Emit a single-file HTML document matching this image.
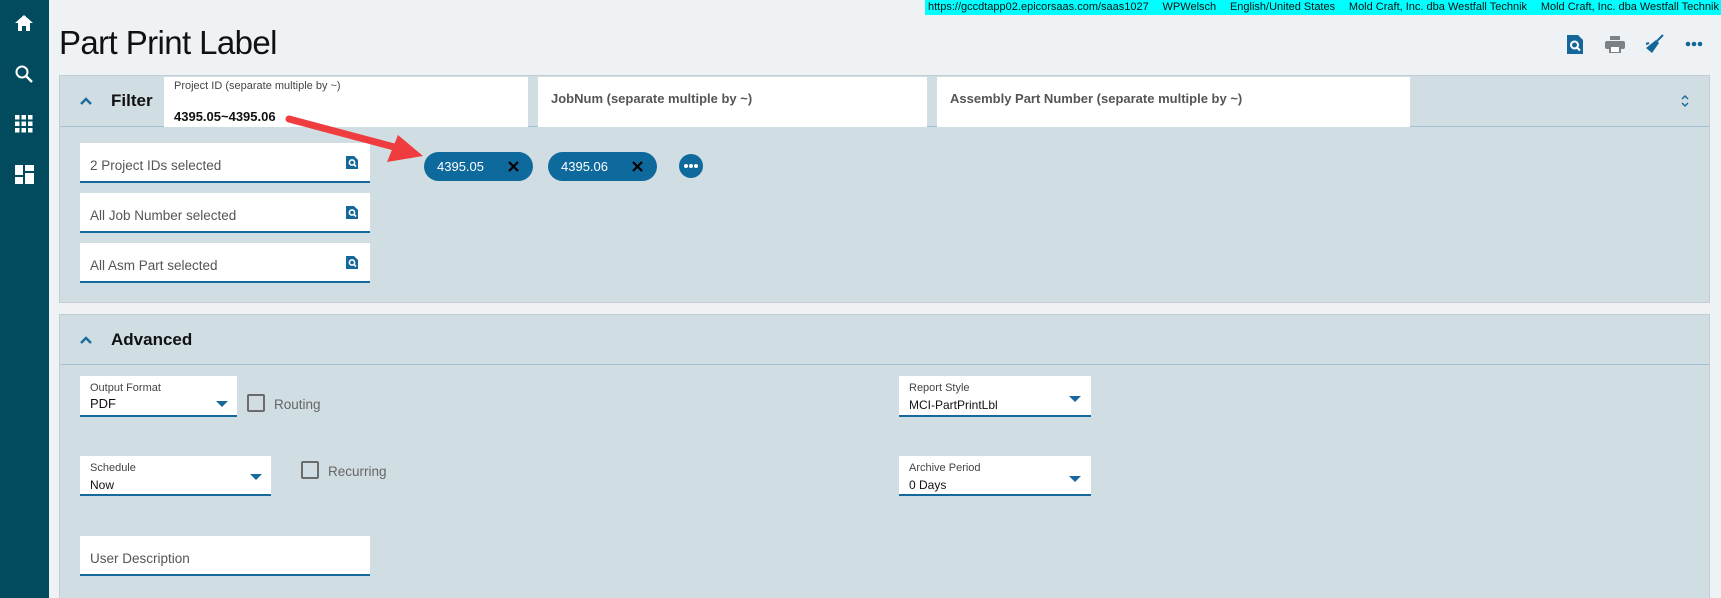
<!DOCTYPE html>
<html><head><meta charset="utf-8"><style>
*{box-sizing:border-box;margin:0;padding:0}
html,body{width:1721px;height:598px;overflow:hidden;background:#eef2f5}
body{font-family:"Liberation Sans",sans-serif;position:relative;color:#111}
.abs{position:absolute}
#side{left:0;top:0;width:49px;height:598px;background:#024b5f}
#top{left:925px;top:0;width:796px;height:15px;background:#00ffff;font-size:11px;line-height:15px;color:#111;display:flex;justify-content:space-between;padding:0 2px 0 3px;white-space:nowrap}
h1{position:absolute;left:59px;top:24px;font-weight:normal;font-size:33px;letter-spacing:-0.6px;color:#111}
.panel{background:#d0dde2;border:1px solid #c3cdd2}
.hdrline{height:1px;background:#9fc3d3}
.box{background:#fff}
.lbl{font-size:11px;color:#444}
.inp{background:#fff;border-bottom:2px solid #16699c}
.ph{font-size:13.5px;color:#555}
.chip{background:#0e6a9c;border-radius:15px;color:#fff;font-size:13px;line-height:29px;padding-left:13px;height:29px}
.cb{width:18px;height:18px;border:2px solid #6b6b6b;border-radius:2px;background:transparent}
.tri{width:0;height:0;border-left:6px solid transparent;border-right:6px solid transparent;border-top:6px solid #16699c}
.sect{font-size:17px;font-weight:bold}
</style></head><body>
<div id="side" class="abs">
 <svg class="abs" style="left:14px;top:14px" width="20" height="18" viewBox="0 0 20 18"><path d="M10 1 L19 9 H16 V17 H12 V12 H8 V17 H4 V9 H1 Z" fill="#fff"/></svg>
 <svg class="abs" style="left:14px;top:64px" width="20" height="20" viewBox="0 0 20 20"><circle cx="8" cy="8" r="5.5" stroke="#fff" stroke-width="2" fill="none"/><path d="M12 12 L18 18" stroke="#fff" stroke-width="2.4"/></svg>
 <svg class="abs" style="left:15px;top:115px" width="18" height="18" viewBox="0 0 18 18" fill="#fff"><rect x="0" y="0" width="4.5" height="4.5"/><rect x="6.5" y="0" width="4.5" height="4.5"/><rect x="13" y="0" width="4.5" height="4.5"/><rect x="0" y="6.5" width="4.5" height="4.5"/><rect x="6.5" y="6.5" width="4.5" height="4.5"/><rect x="13" y="6.5" width="4.5" height="4.5"/><rect x="0" y="13" width="4.5" height="4.5"/><rect x="6.5" y="13" width="4.5" height="4.5"/><rect x="13" y="13" width="4.5" height="4.5"/></svg>
 <svg class="abs" style="left:15px;top:165px" width="19" height="19" viewBox="0 0 19 19" fill="#fff"><rect x="0" y="0" width="8" height="10"/><rect x="0" y="12" width="8" height="7"/><rect x="10" y="0" width="9" height="6"/><rect x="10" y="8" width="9" height="11"/></svg>
</div>
<div id="top" class="abs"><span>https://gccdtapp02.epicorsaas.com/saas1027</span><span>WPWelsch</span><span>English/United States</span><span>Mold Craft, Inc. dba Westfall Technik</span><span>Mold Craft, Inc. dba Westfall Technik</span></div>
<h1>Part Print Label</h1>
<svg class="abs" style="left:1567px;top:35px" width="16" height="19" viewBox="0 0 16 19"><path d="M0 0 H11 L16 5 V19 H0 Z" fill="#15679a"/><circle cx="7.5" cy="10" r="3.5" stroke="#fff" stroke-width="2" fill="none"/><path d="M10 12.5 L13 15.5" stroke="#fff" stroke-width="2"/></svg>
<svg class="abs" style="left:1605px;top:36px" width="20" height="17" viewBox="0 0 20 17" fill="#7a8288"><rect x="5" y="0" width="10" height="4"/><rect x="0" y="5" width="20" height="8" rx="2"/><rect x="5" y="10" width="10" height="7" fill="#fff" stroke="#7a8288" stroke-width="2"/></svg>
<svg class="abs" style="left:1645px;top:34px" width="19" height="20" viewBox="0 0 19 20"><path d="M12 7 L18 1" stroke="#15679a" stroke-width="2"/><path d="M11 6 L14 9 L7 19 L1 14 Z" fill="#15679a"/><path d="M1 10 L4 9" stroke="#15679a" stroke-width="2"/></svg>
<svg class="abs" style="left:1685px;top:41px" width="18" height="6" viewBox="0 0 18 6" fill="#15679a"><circle cx="3" cy="3" r="2.3"/><circle cx="9" cy="3" r="2.3"/><circle cx="15" cy="3" r="2.3"/></svg>

<div class="abs panel" style="left:59px;top:75px;width:1651px;height:228px"></div>
<div class="abs hdrline" style="left:60px;top:126px;width:1649px"></div>
<svg class="abs" style="left:80px;top:97px" width="12" height="8" viewBox="0 0 12 8"><path d="M1 7 L6 2 L11 7" stroke="#1a6d9a" stroke-width="2.4" fill="none"/></svg>
<div class="abs sect" style="left:111px;top:91px">Filter</div>
<div class="abs box" style="left:164px;top:77px;width:364px;height:50px"></div>
<div class="abs lbl" style="left:174px;top:80px">Project ID (separate multiple by ~)</div>
<div class="abs" style="left:174px;top:109px;font-size:13px;font-weight:bold;color:#111">4395.05~4395.06</div>
<div class="abs box" style="left:538px;top:77px;width:389px;height:50px"></div>
<div class="abs" style="left:551px;top:91px;font-size:13px;font-weight:bold;color:#555">JobNum (separate multiple by ~)</div>
<div class="abs box" style="left:937px;top:77px;width:473px;height:50px"></div>
<div class="abs" style="left:950px;top:91px;font-size:13px;font-weight:bold;color:#555">Assembly Part Number (separate multiple by ~)</div>
<svg class="abs" style="left:1681px;top:94px" width="8" height="14" viewBox="0 0 8 14"><path d="M1 5 L4 2 L7 5 M1 9 L4 12 L7 9" stroke="#1a6d9a" stroke-width="1.5" fill="none"/></svg>

<div class="abs inp" style="left:80px;top:143px;width:290px;height:40px"></div>
<div class="abs ph" style="left:90px;top:158px">2 Project IDs selected</div>
<div class="abs inp" style="left:80px;top:193px;width:290px;height:40px"></div>
<div class="abs ph" style="left:90px;top:208px">All Job Number selected</div>
<div class="abs inp" style="left:80px;top:243px;width:290px;height:40px"></div>
<div class="abs ph" style="left:90px;top:258px">All Asm Part selected</div>
<svg class="abs" style="left:346px;top:156px" width="12" height="13" viewBox="0 0 12 13"><path d="M0 0 H8 L12 4 V13 H0 Z" fill="#15679a"/><circle cx="6" cy="6.5" r="2.6" stroke="#fff" stroke-width="1.6" fill="none"/><path d="M8 8.5 L10 10.5" stroke="#fff" stroke-width="1.6"/></svg>
<svg class="abs" style="left:346px;top:206px" width="12" height="13" viewBox="0 0 12 13"><path d="M0 0 H8 L12 4 V13 H0 Z" fill="#15679a"/><circle cx="6" cy="6.5" r="2.6" stroke="#fff" stroke-width="1.6" fill="none"/><path d="M8 8.5 L10 10.5" stroke="#fff" stroke-width="1.6"/></svg>
<svg class="abs" style="left:346px;top:256px" width="12" height="13" viewBox="0 0 12 13"><path d="M0 0 H8 L12 4 V13 H0 Z" fill="#15679a"/><circle cx="6" cy="6.5" r="2.6" stroke="#fff" stroke-width="1.6" fill="none"/><path d="M8 8.5 L10 10.5" stroke="#fff" stroke-width="1.6"/></svg>

<div class="abs chip" style="left:424px;top:152px;width:109px">4395.05</div>
<div class="abs chip" style="left:548px;top:152px;width:109px">4395.06</div>
<svg class="abs" style="left:508px;top:161px" width="11" height="11" viewBox="0 0 11 11"><path d="M1 1 L10 10 M10 1 L1 10" stroke="#000" stroke-width="2.2"/></svg>
<svg class="abs" style="left:632px;top:161px" width="11" height="11" viewBox="0 0 11 11"><path d="M1 1 L10 10 M10 1 L1 10" stroke="#000" stroke-width="2.2"/></svg>
<svg class="abs" style="left:679px;top:154px" width="24" height="24" viewBox="0 0 24 24"><circle cx="12" cy="12" r="12" fill="#0e6a9c"/><circle cx="7" cy="12" r="2" fill="#fff"/><circle cx="12" cy="12" r="2" fill="#fff"/><circle cx="17" cy="12" r="2" fill="#fff"/></svg>
<svg class="abs" style="left:280px;top:110px" width="150" height="55" viewBox="0 0 150 55"><path d="M9 9 L118 38" stroke="#ef3c3f" stroke-width="7" stroke-linecap="round"/><path d="M143 46 L107 52 L118 25 Z" fill="#ef3c3f"/></svg>

<div class="abs panel" style="left:59px;top:314px;width:1651px;height:290px"></div>
<div class="abs hdrline" style="left:60px;top:364px;width:1649px"></div>
<svg class="abs" style="left:80px;top:336px" width="12" height="8" viewBox="0 0 12 8"><path d="M1 7 L6 2 L11 7" stroke="#1a6d9a" stroke-width="2.4" fill="none"/></svg>
<div class="abs sect" style="left:111px;top:330px">Advanced</div>

<div class="abs inp" style="left:80px;top:376px;width:157px;height:41px"></div>
<div class="abs lbl" style="left:90px;top:382px">Output Format</div>
<div class="abs" style="left:90px;top:396px;font-size:13px">PDF</div>
<div class="abs tri" style="left:216px;top:401px"></div>
<div class="abs cb" style="left:247px;top:394px"></div>
<div class="abs ph" style="left:274px;top:397px;color:#666">Routing</div>

<div class="abs inp" style="left:80px;top:456px;width:191px;height:40px"></div>
<div class="abs lbl" style="left:90px;top:462px">Schedule</div>
<div class="abs" style="left:90px;top:478px;font-size:12px">Now</div>
<div class="abs tri" style="left:250px;top:474px"></div>
<div class="abs cb" style="left:301px;top:461px"></div>
<div class="abs ph" style="left:328px;top:464px;color:#666">Recurring</div>

<div class="abs inp" style="left:80px;top:536px;width:290px;height:40px"></div>
<div class="abs ph" style="left:90px;top:551px">User Description</div>

<div class="abs inp" style="left:899px;top:376px;width:192px;height:41px"></div>
<div class="abs lbl" style="left:909px;top:382px">Report Style</div>
<div class="abs" style="left:909px;top:398px;font-size:12px">MCI-PartPrintLbl</div>
<div class="abs tri" style="left:1069px;top:396px"></div>
<div class="abs inp" style="left:899px;top:456px;width:192px;height:40px"></div>
<div class="abs lbl" style="left:909px;top:462px">Archive Period</div>
<div class="abs" style="left:909px;top:478px;font-size:12px">0 Days</div>
<div class="abs tri" style="left:1069px;top:476px"></div>
</body></html>
